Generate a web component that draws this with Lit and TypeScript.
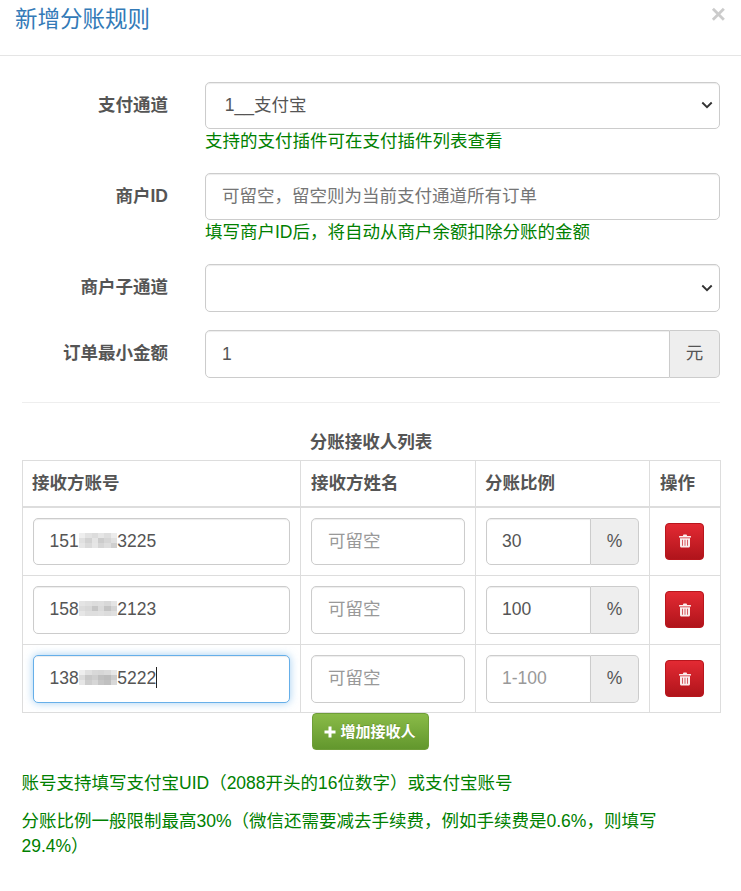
import { LitElement, html, css, svg } from "lit";
import { customElement } from "lit/decorators.js";

const trash = svg`<path fill="#fff" d="M4.500 0.500h3l.7 1.500H11.500a.5.5 0 0 1 .5.5V3.500H0V2.500a.5.5 0 0 1 .5-.5H3.800z"/><path fill="#fff" fill-rule="evenodd" d="M1 4.300h10v7.700c0 .9-.6 1.500-1.400 1.500H2.400C1.600 13.500 1 12.900 1 12zM3.300 5.800v6h.7v-6zM5.650 5.800v6h.7v-6zM8 5.800v6h.7v-6z"/>`;

interface Row { a: string; b: string; cells: string[]; val: string; focus?: boolean; ph?: boolean }
const rows: Row[] = [
  {
    a: "151", b: "3225", val: "30",
    cells: [
      "#eeeeee", "#e2e2e2", "#dcdcdc", "#e6e6e6", "#dedede", "#ececec",
      "#e0e0e0", "#d2d2d2", "#e4e4e4", "#cccccc", "#d6d6d6", "#e0e0e0",
      "#e6e6e6", "#dadada", "#e6e6e6", "#d6d6d6", "#dedede", "#cfcfcf",
    ],
  },
  {
    a: "158", b: "2123", val: "100",
    cells: [
      "#e4e4e4", "#e0e0e0", "#dcdcdc", "#dedede", "#d8d8d8", "#e4e4e4",
      "#dcdcdc", "#d8d8d8", "#c6c6c6", "#dadada", "#c4c4c4", "#d4d4d4",
      "#e6e6e6", "#dedede", "#dedede", "#e0e0e0", "#dcdcdc", "#e0e0e0",
    ],
  },
  {
    a: "138", b: "5222", val: "1-100", focus: true, ph: true,
    cells: [
      "#eeeeee", "#e0e0e0", "#d8d8d8", "#d6d6d6", "#dadada", "#e6e6e6",
      "#dcdcdc", "#c8c8c8", "#cecece", "#c0c0c0", "#bcbcbc", "#cccccc",
      "#e6e6e6", "#cdcdcd", "#d6d6d6", "#c6c6c6", "#c0c0c0", "#d8d8d8",
    ],
  },
];

const chevron = "data:image/svg+xml,%3Csvg xmlns='http://www.w3.org/2000/svg' viewBox='0 0 12 8'%3E%3Cpath fill='none' stroke='%23333' stroke-width='1.900' d='M1.300 1.500L6 6.200l4.700-4.700'/%3E%3C/svg%3E";

@customElement("app-root")
export class AppRoot extends LitElement {
  static styles = css`
    :host { display: block; width: 741px; height: 891px; background: #fff; color: #555; overflow: hidden;
      font-family: "Liberation Sans", "Noto Sans CJK SC", sans-serif; font-size: 17.5px; line-height: 25px; }
    * { box-sizing: border-box; }
    .head { height: 55.5px; border-bottom: 1px solid #e5e5e5; padding: 6px 15px 0 15px; display: flex; justify-content: space-between; }
    .title { font-size: 22.5px; line-height: 28px; color: #337ab7; font-weight: 400; }
    .close { font-size: 26px; font-weight: 700; color: #000; opacity: .2; line-height: 20px; margin-top: -2px; margin-right: 0; }
    .body { padding: 26px 21px 0 22px; }
    .row { display: grid; grid-template-columns: 146px 515px; column-gap: 37px; }
    .row + .row { margin-top: 18.750px; }
    .lab { text-align: right; font-weight: 700; line-height: 47px; }
    .ctl { display: block; width: 100%; height: 47.500px; border: 1px solid #ccc; border-radius: 5px; background: #fff;
      box-shadow: inset 0 1px 1px rgba(0,0,0,.075); padding: 0 16px; font: inherit; color: #555; line-height: 45px; white-space: nowrap; }
    select.ctl { padding: 0 9px; appearance: none; -webkit-appearance: none; background-repeat: no-repeat; background-position: right 6px center; background-size: 12px 8px; }
    .ph { color: #999; }
    .help { color: green; line-height: 25px; margin-top: 0; }
    .group { display: flex; }
    .group .ctl { flex: 1; min-width: 0; border-radius: 5px 0 0 5px; }
    .addon { flex: none; border: 1px solid #ccc; border-left: 0; background: #eee; border-radius: 0 5px 5px 0; text-align: center; line-height: 45px; }
    .row .addon { width: 50px; }
    hr { border: 0; border-top: 1px solid #eee; margin: 24px 0 0; height: 0; }
    .cap { text-align: center; font-weight: 700; font-size: 17.5px; line-height: 25px; margin-top: 27px; margin-bottom: 5px; }
    table { border-collapse: collapse; table-layout: fixed; width: 698px; }
    th, td { border: 1px solid #ddd; }
    th { text-align: left; font-weight: 700; height: 45px; border-bottom-width: 2px; padding: 0 10px 0 9px; line-height: 45px; }
    th:nth-child(2), th:nth-child(4) { padding-left: 10px; }
    td { height: 69px; padding: 10px 10px 0; vertical-align: top; }
    tr.last td { height: 68px; }
    td .ctl { height: 47.500px; }
    td .group .ctl { padding: 0 15px; }
    td .addon { width: 48px; }
    td:first-child .ctl { padding-left: 15.500px; }
    .focus { border-color: #66afe9; box-shadow: inset 0 1px 1px rgba(0,0,0,.075), 0 0 8px rgba(102,175,233,.6); }
    .mos { display: inline-grid; grid-template-columns: repeat(6, 1fr); grid-auto-rows: 5px; width: 38.500px; height: 15px; vertical-align: top; margin-top: 14px; filter: blur(.5px); }
    .mos i { display: block; }
    .caret { display: inline-block; width: 1px; height: 21px; background: #222; vertical-align: -4px; }
    .del { display: flex; align-items: center; justify-content: center; width: 39px; height: 37px; margin: 5px 0 0 5px; border: 1px solid #b8161d; border-radius: 4px;
      background: linear-gradient(#e32a33, #b0141b); padding: 0; }
    .del svg { width: 12px; height: 14px; opacity: .92; display: block; }
    .addwrap { display: flex; justify-content: center; padding-right: 2px; }
    .add { width: 117px; height: 37px; border: 1px solid #6f9e39; border-radius: 4px; color: #fff; font: inherit; font-size: 15px; font-weight: 700;
      background: linear-gradient(#8abb48, #62972d); display: flex; align-items: center; justify-content: center; gap: 4px; padding: 0; text-shadow: 0 -1px 0 rgba(0,0,0,.15); }
    .add svg { width: 12px; height: 12px; display: block; }
    .notes { color: green; margin-top: 21px; padding-right: 40px; margin-left: -0.5px; }
    .notes p { margin: 0 0 13px; }
  `;

  render() {
    const sel = `background-image:url("${chevron}")`;
    return html`
      <div class="head"><div class="title">新增分账规则</div><div class="close">×</div></div>
      <div class="body">
        <div class="row">
          <div class="lab">支付通道</div>
          <div>
            <select class="ctl" style=${sel}><option>&nbsp;&nbsp;1__支付宝</option></select>
            <div class="help">支持的支付插件可在支付插件列表查看</div>
          </div>
        </div>
        <div class="row">
          <div class="lab">商户ID</div>
          <div>
            <input class="ctl" placeholder="可留空，留空则为当前支付通道所有订单" />
            <div class="help">填写商户ID后，将自动从商户余额扣除分账的金额</div>
          </div>
        </div>
        <div class="row">
          <div class="lab">商户子通道</div>
          <div><select class="ctl" style=${sel}><option></option></select></div>
        </div>
        <div class="row">
          <div class="lab">订单最小金额</div>
          <div class="group"><input class="ctl" value="1" /><div class="addon">元</div></div>
        </div>
        <hr />
        <div class="cap">分账接收人列表</div>
        <table>
          <colgroup><col style="width:278px" /><col style="width:175px" /><col style="width:174px" /><col style="width:71px" /></colgroup>
          <thead><tr><th>接收方账号</th><th>接收方姓名</th><th>分账比例</th><th>操作</th></tr></thead>
          <tbody>
            ${rows.map((r, i) => html`
              <tr class=${i === 2 ? "last" : ""}>
                <td><div class="ctl ${r.focus ? "focus" : ""}">${r.a}<span class="mos">${r.cells.map((c) => html`<i style="background:${c}"></i>`)}</span>${r.b}${r.focus ? html`<span class="caret"></span>` : ""}</div></td>
                <td><div class="ctl ph">可留空</div></td>
                <td><div class="group"><div class="ctl ${r.ph ? "ph" : ""}">${r.val}</div><div class="addon">%</div></div></td>
                <td><button class="del"><svg viewBox="0 0 12 14">${trash}</svg></button></td>
              </tr>`)}
          </tbody>
        </table>
        <div class="addwrap"><button class="add"><svg viewBox="0 0 12 12"><path fill="#fff" d="M4.500 0.500h3v4h4v3h-4v4h-3v-4h-4v-3h4z"/></svg>增加接收人</button></div>
        <div class="notes">
          <p>账号支持填写支付宝UID（2088开头的16位数字）或支付宝账号</p>
          <p>分账比例一般限制最高30%（微信还需要减去手续费，例如手续费是0.6%，则填写29.4%）</p>
        </div>
      </div>
    `;
  }
}
